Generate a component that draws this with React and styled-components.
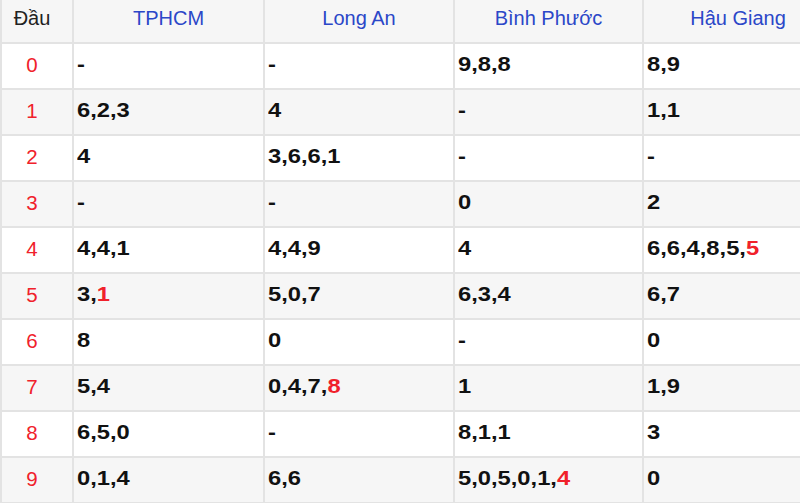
import React from "react";
import styled, { createGlobalStyle } from "styled-components";

const GlobalStyle = createGlobalStyle`
    html, body {
        margin: 0;
        padding: 0;
        background: #fff;
        overflow: hidden;
    }
`

const Table = styled.table`
    border-collapse: collapse;
    table-layout: fixed;
    width: 832px;
    margin-top: -1px;
    font-family: "Liberation Sans", Arial, sans-serif;
`

const HeadRow = styled.tr`
    height: 44px;
    background: #f6f6f6;
`

const Row = styled.tr`
    height: 46px;
    background: ${({ $odd }) => ($odd ? "#f6f6f6" : "#fff")};
`

const HeadCell = styled.th`
    border: 2px solid #e3e3e3;
    border-top: none;
    font-weight: normal;
    font-size: 20px;
    color: ${({ $first }) => ($first ? "#222" : "#2b47c8")};
    text-align: center;
    padding: ${({ $first }) => ($first ? "0 10px 5px 0" : "0 0 5px")};
    vertical-align: middle;
`

const HeadDigit = styled.td`
    border: 2px solid #e3e3e3;
    font-size: 20.5px;
    color: #f0212b;
    text-align: center;
    padding: 0 10px 2px 0;
`

const Cell = styled.td`
    border: 2px solid #e3e3e3;
    color: #111;
    padding: 0 0 5px 3px;
    white-space: nowrap;
`

const Numbers = styled.span`
    display: inline-block;
    font-weight: bold;
    font-size: 21px;
    transform: scaleX(1.13);
    transform-origin: left center;
`

const Hot = styled.span`
    color: #f0212b;
`

const columns = [
    { name: "TPHCM", w: 191 },
    { name: "Long An", w: 190 },
    { name: "Bình Phước", w: 189 },
    { name: "Hậu Giang", w: 190 },
]

// a * marks the tail of the special prize, drawn in red
const data = [
    ["-", "-", "9,8,8", "8,9"],
    ["6,2,3", "4", "-", "1,1"],
    ["4", "3,6,6,1", "-", "-"],
    ["-", "-", "0", "2"],
    ["4,4,1", "4,4,9", "4", "6,6,4,8,5,*5"],
    ["3,*1", "5,0,7", "6,3,4", "6,7"],
    ["8", "0", "-", "0"],
    ["5,4", "0,4,7,*8", "1", "1,9"],
    ["6,5,0", "-", "8,1,1", "3"],
    ["0,1,4", "6,6", "5,0,5,0,1,*4", "0"],
]

const Value = ({ text }) => {
    const i = text.indexOf("*");
    if (i < 0) return <Numbers>{text}</Numbers>;
    return (
        <Numbers>
            {text.slice(0, i)}
            <Hot>{text.slice(i + 1)}</Hot>
        </Numbers>
    );
}

export default function App() {
    return (
        <>
            <GlobalStyle />
            <Table>
                <colgroup>
                    <col style={{ width: 72 }} />
                    {columns.map((c) => (
                        <col key={c.name} style={{ width: c.w }} />
                    ))}
                </colgroup>
                <thead>
                    <HeadRow>
                        <HeadCell $first>Đầu</HeadCell>
                        {columns.map((c) => (
                            <HeadCell key={c.name}>{c.name}</HeadCell>
                        ))}
                    </HeadRow>
                </thead>
                <tbody>
                    {data.map((row, i) => (
                        <Row key={i} $odd={i % 2 === 1}>
                            <HeadDigit>{i}</HeadDigit>
                            {row.map((v, j) => (
                                <Cell key={j}>
                                    <Value text={v} />
                                </Cell>
                            ))}
                        </Row>
                    ))}
                </tbody>
            </Table>
        </>
    );
}
